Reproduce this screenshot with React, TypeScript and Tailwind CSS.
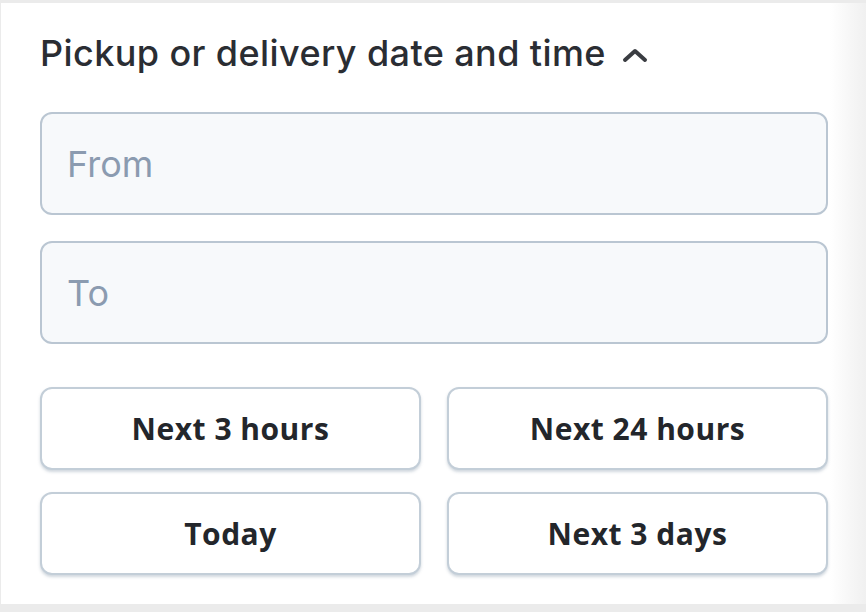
import React from "react";

export default function App() {
  const btn =
    "h-[83px] rounded-[12px] border-2 border-[#c3ced8] bg-white shadow-[0_2px_3px_rgba(120,140,160,0.35)] flex items-center justify-center text-[30px] font-bold text-[#23262b] tracking-[0.5px]";
  return (
    <div className="w-[866px] h-[612px] bg-[#ebebeb] pt-[3px] pb-[8px] pl-[1px] overflow-hidden">
      <div className="relative h-full bg-white pl-[39px] pr-[38px] pt-[26px]">
        <div
          className="flex items-center text-[36px] font-medium text-[#2a2d33] h-[48px] tracking-[0.4px]"
          style={{ fontFamily: "Inter, 'Noto Sans', sans-serif" }}
        >
          <span>Pickup or delivery date and time</span>
          <svg className="ml-[16px] mt-[4px]" width="26" height="16" viewBox="0 0 26 16">
            <path d="M3 13 L13 4 L23 13" fill="none" stroke="#3a3d42" strokeWidth="4" strokeLinecap="round" strokeLinejoin="round" />
          </svg>
        </div>
        <div className="mt-[35px] flex flex-col gap-[26px]" style={{ fontFamily: "Inter, 'Noto Sans', sans-serif" }}>
          <div className="h-[103px] rounded-[12px] border-2 border-[#bac6d2] bg-[#f7f9fb] flex items-center pl-[25px] text-[36px] text-[#8b9bb0]">
            From
          </div>
          <div className="h-[103px] rounded-[12px] border-2 border-[#bac6d2] bg-[#f7f9fb] flex items-center pl-[25px] text-[36px] text-[#8b9bb0]">
            To
          </div>
        </div>
        <div
          className="mt-[43px] grid grid-cols-2 gap-x-[26px] gap-y-[22px]"
          style={{ fontFamily: "'Open Sans', sans-serif" }}
        >
          <div className={btn}>Next 3 hours</div>
          <div className={btn}>Next 24 hours</div>
          <div className={btn}>Today</div>
          <div className={btn}>Next 3 days</div>
        </div>
        <div className="absolute top-0 right-0 h-full w-[36px] bg-gradient-to-r from-white/0 to-[#f0f0f0] pointer-events-none" />
      </div>
    </div>
  );
}
